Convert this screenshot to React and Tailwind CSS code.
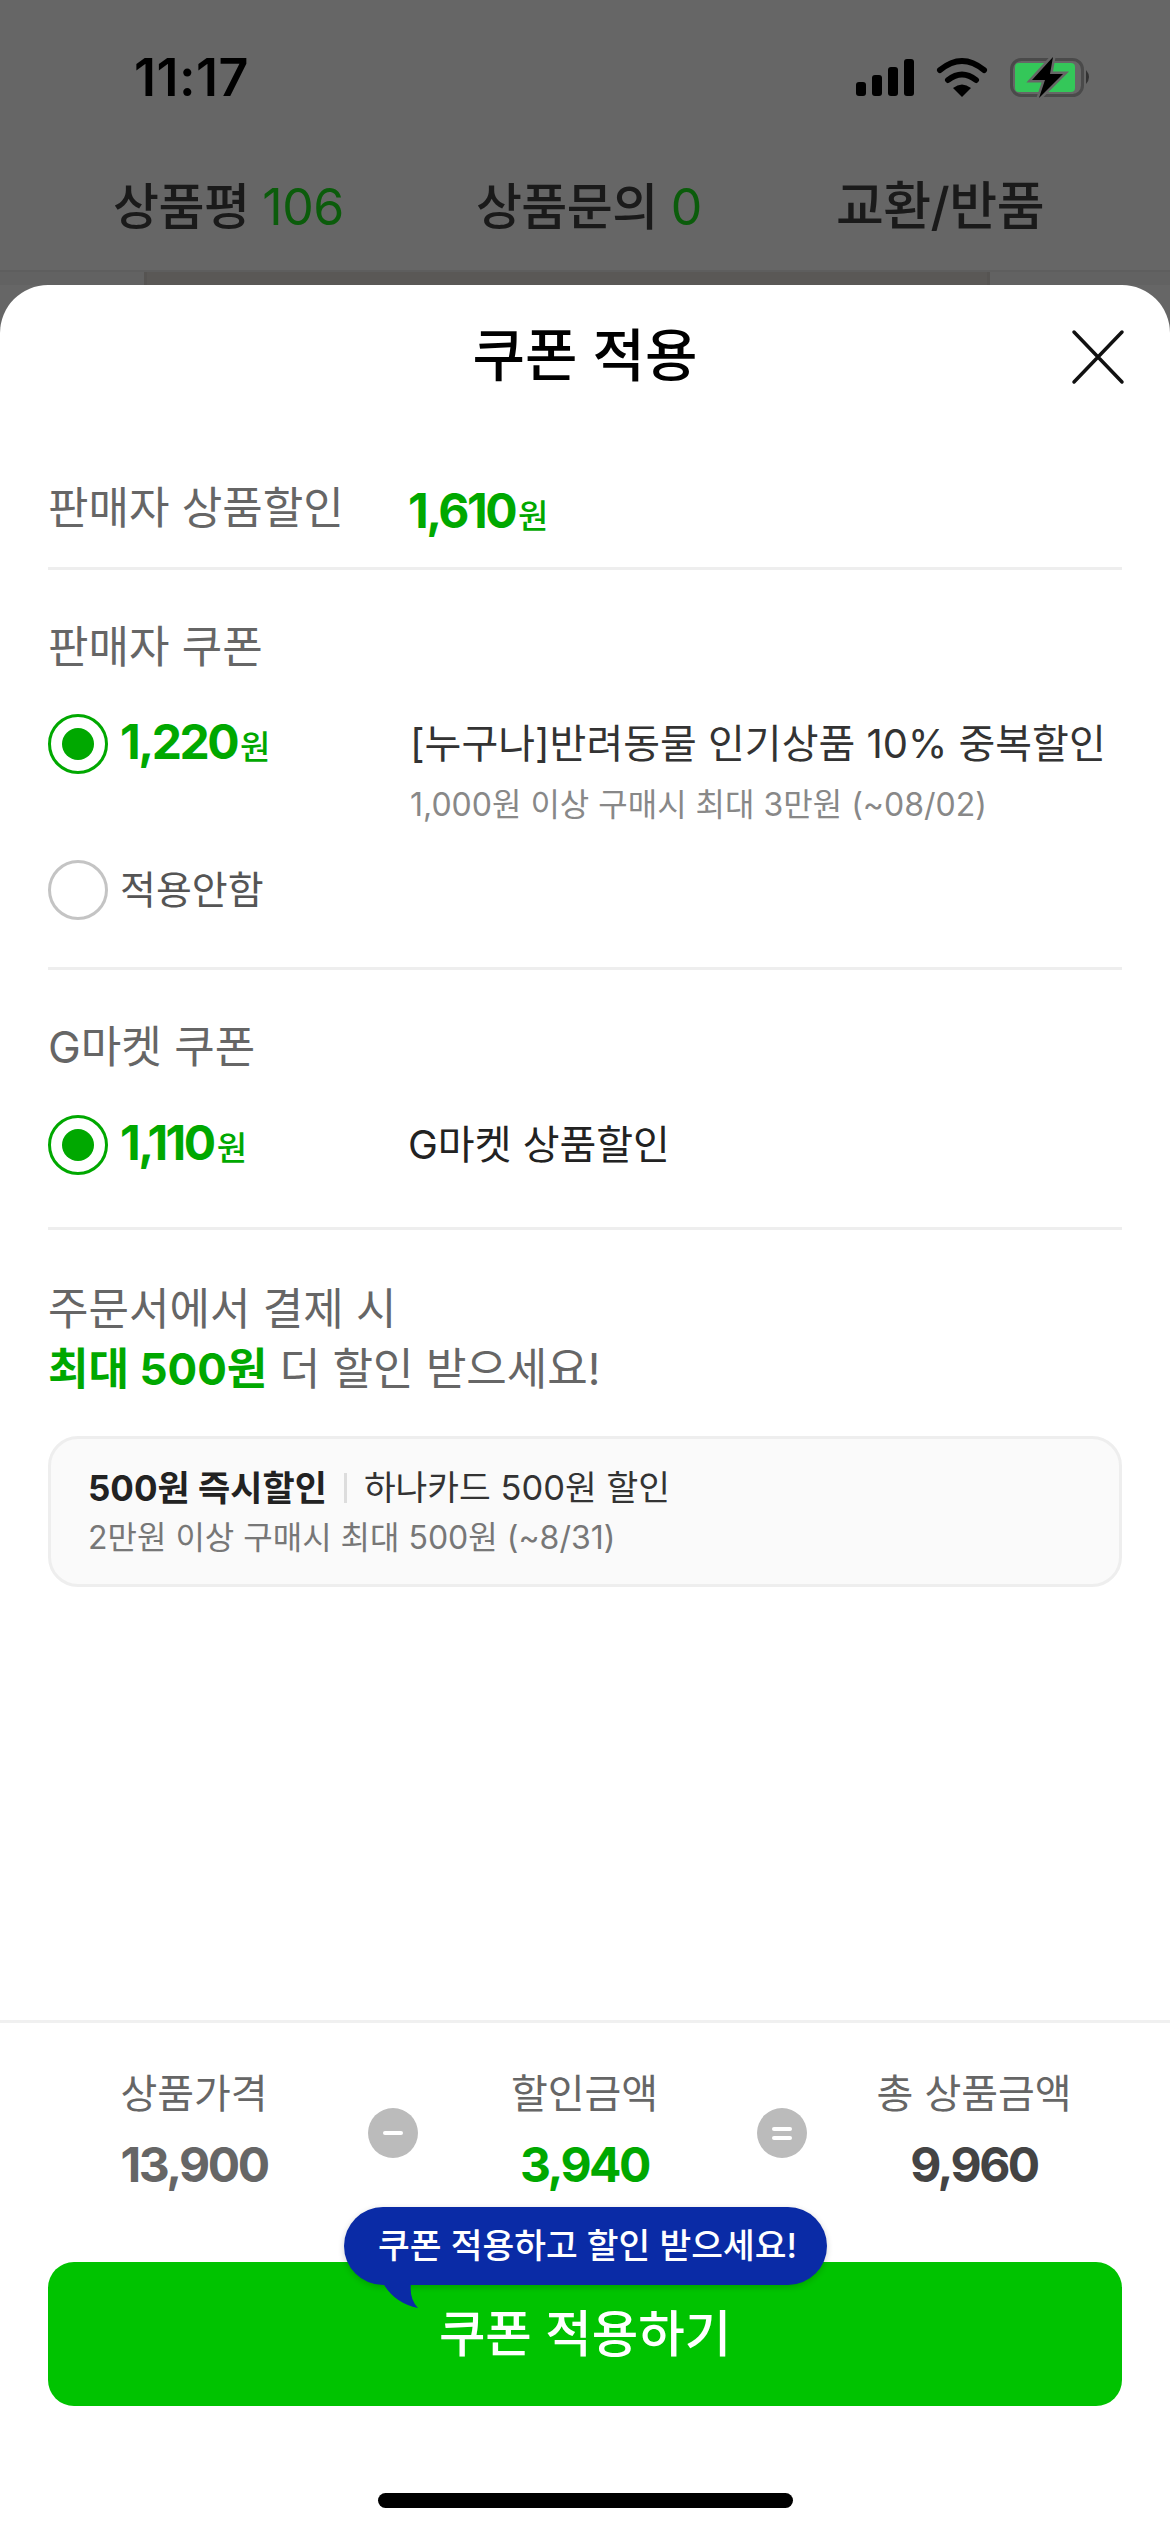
function StatusIcons() {
  // x/y in the viewBox are the page pixels of the status bar, shifted by the origin
  return (
    <svg width="240" height="48" viewBox="856 54 240 48" fill="none">
      <rect x="856" y="82" width="10" height="14" rx="3" fill="#000" />
      <rect x="872" y="75" width="10" height="21" rx="3" fill="#000" />
      <rect x="888" y="67" width="10" height="29" rx="3" fill="#000" />
      <rect x="904" y="59" width="10" height="37" rx="3" fill="#000" />
      <path d="M940 70 Q962 52 984 70" stroke="#000" strokeWidth="6" strokeLinecap="round" />
      <path d="M948 80 Q962 69 976 80" stroke="#000" strokeWidth="6" strokeLinecap="round" />
      <path d="M953 88 Q962 81 971 88 L962 97 Z" fill="#000" />
      <rect x="1011.5" y="59.5" width="71" height="36" rx="10" stroke="#4a4a4a" strokeWidth="3" />
      <rect x="1015" y="63" width="60" height="29" rx="4" fill="#34c759" />
      <path d="M1086 70 Q1092 77 1086 84 Z" fill="#333" />
      <path
        d="M1053 57 L1032 80 L1045 80 L1039 98 L1063 74 L1050 74 Z"
        fill="#000"
        stroke="#666"
        strokeWidth="5"
        paintOrder="stroke"
      />
    </svg>
  );
}

function Radio({ checked }) {
  return (
    <span
      className={`flex h-[60px] w-[60px] flex-shrink-0 items-center justify-center rounded-full border-[3px] ${
        checked ? "border-[#00a800]" : "border-[#c4c4c4]"
      }`}
    >
      {checked && <span className="h-[32px] w-[32px] rounded-full bg-[#00a800]" />}
    </span>
  );
}

function Won({ value }) {
  return (
    <span className="flex items-baseline text-[#00a800]">
      <span className="text-[48px] leading-[48px] font-bold tracking-[-2.5px]">{value}</span>
      <span className="ml-[3px] text-[33px] leading-[48px] font-medium">원</span>
    </span>
  );
}

function Divider() {
  return <div className="mx-[48px] h-[3px] bg-[#eeeeee]" />;
}

function SectionTitle({ children }) {
  return <h3 className="text-[44px] leading-[48px] font-normal text-[#666666]">{children}</h3>;
}

function Summary({ label, value, color }) {
  return (
    <div className="flex flex-col items-center">
      <span className="text-[40px] leading-[48px] text-[#666666]">{label}</span>
      <span className={`mt-[23px] text-[48px] leading-[48px] font-bold tracking-[-2.5px] ${color}`}>
        {value}
      </span>
    </div>
  );
}

function Operator({ children }) {
  return (
    <span className="mt-[7px] flex h-[50px] w-[50px] flex-col items-center justify-center gap-[5px] self-center rounded-full bg-[#bbbbbb]">
      {children}
    </span>
  );
}

export default function App() {
  return (
    <div className="flex h-[2532px] w-[1170px] flex-col overflow-hidden bg-[#666666] font-['Inter','Noto_Sans_CJK_KR',sans-serif]">
      <div className="flex h-[156px] flex-shrink-0 items-center justify-between pr-[74px] pl-[134px]">
        <span className="text-[52px] leading-none font-semibold tracking-[0.5px] text-black">11:17</span>
        <StatusIcons />
      </div>

      <div className="flex h-[102px] flex-shrink-0 items-center justify-between pr-[126px] pl-[113px] text-[50px] font-medium tracking-[-0.5px] text-[#1a1a1a]">
        <span>
          상품평 <span className="font-normal text-[#0b5c0b]">106</span>
        </span>
        <span className="mr-[2px]">
          상품문의 <span className="font-normal text-[#0b5c0b]">0</span>
        </span>
        <span className="text-[52px]">교환/반품</span>
      </div>

      <div className="mt-[12px] h-[15px] flex-shrink-0 border-t-[2px] border-[#5e5e5e] bg-[#626262] pr-[180px] pl-[144px]">
        <div className="h-full border-x-[3px] border-[#565452] bg-[#5a5856]" />
      </div>

      <div className="flex min-h-0 flex-1 flex-col rounded-t-[48px] bg-white">
        <div className="relative flex h-[140px] flex-shrink-0 items-center justify-center">
          <h2 className="text-[57px] leading-none font-medium text-black">쿠폰 적용</h2>
          <svg className="absolute top-[44px] left-[1071px]" width="54" height="56" viewBox="0 0 54 56" fill="none">
            <path d="M3 3 L51 53 M51 3 L3 53" stroke="#111" strokeWidth="3.5" strokeLinecap="round" />
          </svg>
        </div>

        <div className="flex h-[142px] flex-shrink-0 items-start pt-[59px] pl-[48px]">
          <span className="w-[360px] text-[44px] leading-[48px] text-[#666666]">판매자 상품할인</span>
          <div className="mt-[3px]">
            <Won value="1,610" />
          </div>
        </div>
        <Divider />

        <div className="h-[397px] flex-shrink-0 pt-[53px] pl-[48px]">
          <SectionTitle>판매자 쿠폰</SectionTitle>
          <div className="mt-[43px] flex items-start">
            <Radio checked />
            <div className="ml-[12px] flex h-[60px] w-[290px] items-center">
              <Won value="1,220" />
            </div>
            <div className="pt-[6px]">
              <p className="text-[40px] leading-[48px] text-[#333333]">[누구나]반려동물 인기상품 10% 중복할인</p>
              <p className="mt-[13px] text-[32px] leading-[48px] text-[#888888]">
                1,000원 이상 구매시 최대 3만원 (~08/02)
              </p>
            </div>
          </div>
          <div className="mt-[31px] flex items-center">
            <Radio />
            <span className="ml-[12px] text-[39px] leading-[48px] text-[#555555]">적용안함</span>
          </div>
        </div>
        <Divider />

        <div className="h-[257px] flex-shrink-0 pt-[53px] pl-[48px]">
          <SectionTitle>G마켓 쿠폰</SectionTitle>
          <div className="mt-[44px] flex items-center">
            <Radio checked />
            <div className="ml-[12px] w-[288px]">
              <Won value="1,110" />
            </div>
            <span className="text-[40px] leading-[48px] text-[#222222]">G마켓 상품할인</span>
          </div>
        </div>
        <Divider />

        <div className="flex-shrink-0 px-[48px] pt-[49px]">
          <p className="text-[44px] leading-[60px] text-[#666666]">
            주문서에서 결제 시
            <br />
            <span className="font-bold text-[#00a800]">최대 500원</span> 더 할인 받으세요!
          </p>
          <div className="mt-[37px] flex h-[151px] flex-col justify-center rounded-[30px] border-[3px] border-[#eeeeee] bg-[#fafafa] pl-[37px]">
            <div className="flex items-center">
              <span className="text-[35px] leading-[46px] font-bold text-[#222222]">500원 즉시할인</span>
              <span className="mx-[17px] h-[30px] w-[3px] bg-[#dddddd]" />
              <span className="text-[34.5px] leading-[46px] text-[#333333]">하나카드 500원 할인</span>
            </div>
            <span className="mt-[6px] text-[32px] leading-[42px] text-[#777777]">
              2만원 이상 구매시 최대 500원 (~8/31)
            </span>
          </div>
        </div>

        <div className="flex-1" />

        <div className="flex-shrink-0 border-t-[3px] border-[#f0f0f0] pt-[47px]">
          <div className="grid grid-cols-[348px_50px_339px_50px_334px] pl-[20px]">
            <Summary label="상품가격" value="13,900" color="text-[#666666]" />
            <Operator>
              <span className="h-[4px] w-[20px] rounded-full bg-white" />
            </Operator>
            <div className="pr-[6px]">
              <Summary label="할인금액" value="3,940" color="text-[#00a800]" />
            </div>
            <Operator>
              <span className="h-[4px] w-[20px] rounded-full bg-white" />
              <span className="h-[4px] w-[20px] rounded-full bg-white" />
            </Operator>
            <div>
              <Summary label="총 상품금액" value="9,960" color="text-[#444444]" />
            </div>
          </div>

          <div className="relative mx-[48px] mt-[73px] flex h-[144px] items-center justify-center rounded-[26px] bg-[#00c300]">
            <span className="text-[50.5px] leading-none font-medium text-white">쿠폰 적용하기</span>
            <div className="absolute top-[-55px] left-[296px] flex h-[78px] w-[483px] items-center justify-center rounded-[39px] bg-[#0a2ba6] pl-[4px] shadow-[0_2px_6px_rgba(0,0,0,0.18)]">
              <span className="text-[34.5px] leading-none font-medium text-white">쿠폰 적용하고 할인 받으세요!</span>
              <svg className="absolute top-[76px] left-[36px]" width="40" height="28" viewBox="0 0 40 28" fill="none">
                <path d="M3 0 Q14 20 38 25 Q29 16 31 0 Z" fill="#0a2ba6" />
              </svg>
            </div>
          </div>

          <div className="flex h-[126px] items-end justify-center pb-[24px]">
            <span className="h-[15px] w-[415px] rounded-full bg-black" />
          </div>
        </div>
      </div>
    </div>
  );
}
